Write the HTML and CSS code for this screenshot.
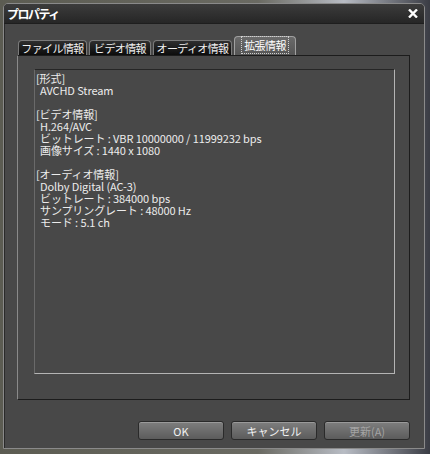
FILE: index.html
```html
<!DOCTYPE html>
<html lang="ja">
<head>
    <meta charset="UTF-8">
    <title>プロパティ</title>
    <link rel="stylesheet" href="styles.css">
</head>
<body>
    <div class="desktop">
        <div class="dialog">
            <div class="titlebar">
                <span class="title">プロパティ</span>
                <svg class="close" width="10" height="9" viewBox="0 0 10 9">
                    <path d="M1 0.5 L9 8.5 M9 0.5 L1 8.5" stroke="#ffffff" stroke-width="2.4"/>
                </svg>
            </div>
            <div class="dialog-body">
                <div class="tabs">
                    <div class="tab tab-file">ファイル情報</div>
                    <div class="tab tab-video">ビデオ情報</div>
                    <div class="tab tab-audio">オーディオ情報</div>
                    <div class="tab tab-ext active"><span class="focus">拡張情報</span></div>
                </div>
                <div class="panel">
                    <div class="info-box">
                        <div class="line">[形式]</div>
                        <div class="line indent">AVCHD Stream</div>
                        <div class="line"></div>
                        <div class="line">[ビデオ情報]</div>
                        <div class="line indent">H.264/AVC</div>
                        <div class="line indent">ビットレート : VBR 10000000 / 11999232 bps</div>
                        <div class="line indent">画像サイズ : 1440 x 1080</div>
                        <div class="line"></div>
                        <div class="line">[オーディオ情報]</div>
                        <div class="line indent">Dolby Digital (AC-3)</div>
                        <div class="line indent">ビットレート : 384000 bps</div>
                        <div class="line indent">サンプリングレート : 48000 Hz</div>
                        <div class="line indent">モード : 5.1 ch</div>
                    </div>
                </div>
                <div class="buttons">
                    <button>OK</button>
                    <button>キャンセル</button>
                    <button class="disabled">更新(A)</button>
                </div>
            </div>
        </div>
    </div>
</body>
</html>
```

FILE: styles.css
```css
:root {
    --dialog-bg: #484848;
    --text-light: #ececec;
    --line-dark: #1c1c1c;
    --line-light: #9a9a9a;
}

body {
    margin: 0;
    font-family: "Noto Sans CJK JP", "Noto Sans", sans-serif;
    font-size: 11px;
}

.desktop {
    width: 430px;
    height: 454px;
    padding: 3px 5px 5px 3px;
    box-sizing: border-box;
    background: linear-gradient(90deg, #5c5c52 0%, #6a6a62 60%, #b8bcc4 80%, #3a3c44 100%);
}

.dialog {
    height: 446px;
    display: flex;
    flex-direction: column;
    background-color: var(--dialog-bg);
    border: 1px solid #8a8a8a;
    border-radius: 5px 5px 0 0;
    box-sizing: border-box;
    box-shadow: inset 1px 0 0 #2a2a2a;
}

.titlebar {
    height: 19px;
    display: flex;
    justify-content: space-between;
    align-items: center;
    padding: 0 6px 0 3px;
    background: linear-gradient(#3c3c3c, #262626);
    border-bottom: 1px solid #1e1e1e;
    border-radius: 4px 4px 0 0;
}

.title {
    color: #ffffff;
    font-weight: bold;
    font-size: 12px;
    letter-spacing: -1.5px;
}

.close {
    display: block;
}

.dialog-body {
    flex: 1;
    display: flex;
    flex-direction: column;
    padding: 13px 14px 8px 13px;
}

.tabs {
    display: flex;
    align-items: flex-end;
    height: 18px;
    padding-left: 1px;
}

.tab {
    height: 15px;
    line-height: 14px;
    box-sizing: border-box;
    color: #f0f0f0;
    text-align: center;
    background: linear-gradient(#2e2e2e, #0c0c0c);
    border: 1px solid #7a7a7a;
    border-bottom: none;
    border-radius: 4px 4px 0 0;
    white-space: nowrap;
    letter-spacing: -0.6px;
}

.tab-file { width: 69px; }
.tab-video { width: 62px; margin-left: 2px; }
.tab-audio { width: 79px; margin-left: 2px; }
.tab-ext { width: 62px; margin-left: 2px; }

.tab.active {
    height: 19px;
    line-height: 17px;
    background: linear-gradient(#6a6a6a, #555555);
    border-color: #a0a0a0;
    color: #ffffff;
}

.focus {
    border: 1px dotted #d0d0d0;
    padding: 0 2px;
}

.panel {
    height: 345px;
    box-sizing: border-box;
    border: 1px solid var(--line-dark);
    border-left-color: #8a8a8a;
    padding: 13px 14px 25px 16px;
}

.info-box {
    height: 100%;
    box-sizing: border-box;
    border: 1px solid #b4b4b4;
    border-top-color: #262626;
    border-left-color: #6a6a6a;
    padding: 2px 0 0 1px;
    color: var(--text-light);
}

.line {
    height: 12px;
    line-height: 12px;
    white-space: pre;
    letter-spacing: -0.1px;
}

.line.indent {
    padding-left: 4px;
}

.buttons {
    display: flex;
    justify-content: flex-end;
    gap: 7px;
    margin-top: 21px;
}

button {
    width: 86px;
    height: 19px;
    padding: 0;
    font-family: inherit;
    font-size: 11px;
    color: #f2f2f2;
    background: linear-gradient(#7e7e7e, #5c5c5c);
    border: 1px solid #2a2a2a;
    border-radius: 3px;
    box-shadow: inset 0 1px 0 #9a9a9a;
}

button.disabled {
    color: #a4a4a4;
}
```
